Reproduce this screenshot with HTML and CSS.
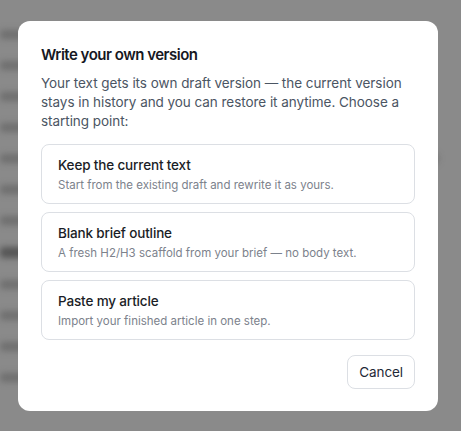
FILE: index.html
```html
<!DOCTYPE html>
<html lang="en">
<head>
<meta charset="utf-8">
<title>Write your own version</title>
<link rel="stylesheet" href="styles.css">
</head>
<body>
<div class="page" aria-hidden="true">
  <div class="line w70"></div>
  <div class="line w90"></div>
  <div class="line w80"></div>
  <div class="line w60"></div>
  <div class="line w95"></div>
  <div class="line w85"></div>
  <div class="line w75"></div>
  <div class="line w40 dark"></div>
  <div class="line w90"></div>
  <div class="line w80"></div>
  <div class="line w85"></div>
  <div class="line w60"></div>
</div>
<div class="overlay">
  <div class="modal" role="dialog" aria-labelledby="t">
    <h2 id="t" class="title">Write your own version</h2>
    <p class="desc">Your text gets its own draft version — the current version stays in history and you can restore it anytime. Choose a starting point:</p>
    <div class="options">
      <button class="option">
        <span class="opt-title">Keep the current text</span>
        <span class="opt-sub">Start from the existing draft and rewrite it as yours.</span>
      </button>
      <button class="option">
        <span class="opt-title">Blank brief outline</span>
        <span class="opt-sub">A fresh H2/H3 scaffold from your brief — no body text.</span>
      </button>
      <button class="option">
        <span class="opt-title">Paste my article</span>
        <span class="opt-sub">Import your finished article in one step.</span>
      </button>
    </div>
    <div class="footer">
      <button class="cancel">Cancel</button>
    </div>
  </div>
</div>
</body>
</html>
```
FILE: styles.css
```css
* { box-sizing: border-box; }
html, body { margin: 0; padding: 0; }
body {
  width: 461px;
  height: 431px;
  overflow: hidden;
  background: #8a8a8a;
  font-family: Inter, "Noto Sans", sans-serif;
  position: relative;
}
.page {
  padding: 30px 0 0 0;
  display: flex;
  flex-direction: column;
  gap: 22px;
  filter: blur(3px);
}
.line {
  height: 9px;
  background: #6e6e6e;
  border-radius: 3px;
}
.line.dark { background: #555; height: 11px; }
.w40 { width: 40%; }
.w60 { width: 60%; }
.w70 { width: 70%; }
.w75 { width: 75%; }
.w80 { width: 80%; }
.w85 { width: 85%; }
.w90 { width: 90%; }
.w95 { width: 95%; }
.overlay {
  position: absolute;
  inset: 0;
  padding: 21px 0 0 18px;
}
.modal {
  width: 420px;
  height: 390px;
  background: #fff;
  border-radius: 12px;
  padding: 23px 23px 22px 23px;
  display: flex;
  flex-direction: column;
}
.title {
  margin: 0;
  font-size: 15px;
  font-weight: 600;
  line-height: 22px;
  color: #161823;
  letter-spacing: -0.5px;
}
.desc {
  margin: 8px 0 0;
  font-size: 13.5px;
  line-height: 19px;
  color: #4b5563;
  letter-spacing: -0.05px;
}
.options {
  margin-top: 13px;
  display: flex;
  flex-direction: column;
  gap: 8px;
}
.option {
  display: flex;
  flex-direction: column;
  align-items: flex-start;
  gap: 3px;
  width: 100%;
  height: 60px;
  padding: 11px 16px;
  background: #fff;
  border: 1px solid #dcdfe4;
  border-radius: 8px;
  font-family: inherit;
  text-align: left;
  cursor: pointer;
}
.opt-title {
  font-size: 13.5px;
  font-weight: 450;
  line-height: 18px;
  color: #1a1d26;
  letter-spacing: -0.15px;
}
.opt-sub {
  font-size: 11.5px;
  line-height: 16px;
  color: #7c828c;
}
.footer {
  margin-top: auto;
  display: flex;
  justify-content: flex-end;
}
.cancel {
  height: 34px;
  padding: 0 11px;
  background: #fff;
  border: 1px solid #dcdfe4;
  border-radius: 8px;
  font-family: inherit;
  font-size: 13.5px;
  color: #1f2937;
  letter-spacing: -0.1px;
  cursor: pointer;
}
```
